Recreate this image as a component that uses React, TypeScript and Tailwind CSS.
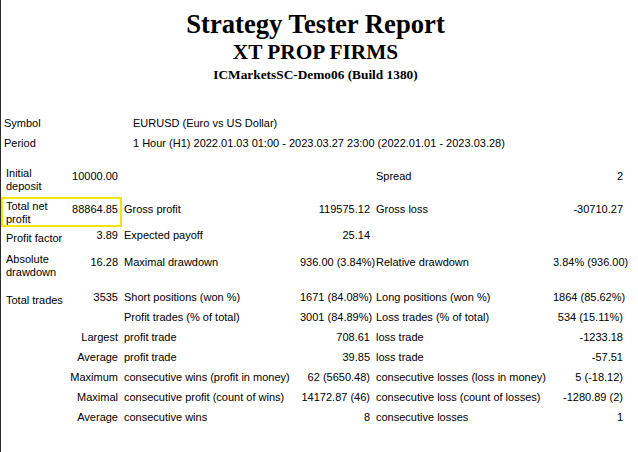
import React from "react";

type Cell = React.ReactNode;

const grid =
  "grid grid-cols-[58px_50px_170px_70px_171px_70px] gap-x-[6px] pl-[3px] pr-[8px]";

// left label + value, offset down the way the report renders it
const Label = ({ children }: { children: Cell }) => (
  <div className="mt-[7px] pl-[2px] whitespace-nowrap leading-[13px]">{children}</div>
);

const Num = ({ children }: { children?: Cell }) => (
  <div className="text-right whitespace-nowrap">{children}</div>
);

const Txt = ({ children }: { children?: Cell }) => (
  <div className="whitespace-nowrap">{children}</div>
);

const StatRow = ({
  h,
  label,
  value,
  l2,
  v2,
  l3,
  v3,
}: {
  h: string;
  label?: Cell;
  value?: Cell;
  l2?: Cell;
  v2?: Cell;
  l3?: Cell;
  v3?: Cell;
}) => (
  <div className={`${grid} ${h} items-center`}>
    {label ? <Label>{label}</Label> : <div />}
    <Num>{value}</Num>
    <Txt>{l2}</Txt>
    <Num>{v2}</Num>
    <Txt>{l3}</Txt>
    <Num>{v3}</Num>
  </div>
);

const SubRow = ({
  head,
  l2,
  v2,
  l3,
  v3,
}: {
  head: string;
  l2: string;
  v2: string;
  l3: string;
  v3: string;
}) => (
  <div className={`${grid} h-[20px] items-center`}>
    <div className="col-span-2 text-right">{head}</div>
    <Txt>{l2}</Txt>
    <Num>{v2}</Num>
    <Txt>{l3}</Txt>
    <Num>{v3}</Num>
  </div>
);

export default function App() {
  return (
    <div className="w-[638px] h-[452px] overflow-hidden bg-white border-l border-[#2e2e2e] text-black">
      <div className="pr-[8px] pt-[9px] text-center font-bold font-['Liberation_Serif',_'Times_New_Roman',_serif]">
        <div className="text-[26.67px] leading-[30px]">Strategy Tester Report</div>
        <div className="text-[21.33px] leading-[26px]">XT PROP FIRMS</div>
        <div className="mt-[1px] text-[13.33px] leading-[18px]">ICMarketsSC-Demo06 (Build 1380)</div>
      </div>

      <div className="mt-[29px] text-[11px] leading-[13px] font-['Liberation_Sans',_Arial,_sans-serif]">
        <div className="flex h-[20px] items-center pl-[3px]">
          <div className="w-[129px]">Symbol</div>
          <div>EURUSD (Euro vs US Dollar)</div>
        </div>
        <div className="flex h-[20px] items-center pl-[3px]">
          <div className="w-[129px]">Period</div>
          <div className="whitespace-nowrap">
            1 Hour (H1) 2022.01.03 01:00 - 2023.03.27 23:00 (2022.01.01 - 2023.03.28)
          </div>
        </div>

        <div className="h-[7px]" />
        <StatRow
          h="h-[32px]"
          label={
            <>
              Initial
              <br />
              deposit
            </>
          }
          value="10000.00"
          l3="Spread"
          v3="2"
        />

        <div className={`${grid} h-[33px] items-start`}>
          <div className="col-span-2 -ml-[3px] -mr-[4px] mt-[5px] h-[30px] border-2 border-[#f3e40c] grid grid-cols-[58px_50px] gap-x-[6px] pl-[1px] pr-[2px]">
            <div className="pl-[2px] pt-[1px] leading-[13px]">
              Total net
              <br />
              profit
            </div>
            <div className="pt-[4px] text-right">88864.85</div>
          </div>
          <div className="pt-[11px]">Gross profit</div>
          <div className="pt-[11px] text-right">119575.12</div>
          <div className="pt-[11px]">Gross loss</div>
          <div className="pt-[11px] text-right">-30710.27</div>
        </div>

        <StatRow h="h-[19px]" label="Profit factor" value="3.89" l2="Expected payoff" v2="25.14" />
        <StatRow
          h="h-[36px]"
          label={
            <>
              Absolute
              <br />
              drawdown
            </>
          }
          value="16.28"
          l2="Maximal drawdown"
          v2="936.00 (3.84%)"
          l3="Relative drawdown"
          v3="3.84% (936.00)"
        />

        <div className="h-[7px]" />
        <StatRow
          h="h-[20px]"
          label="Total trades"
          value="3535"
          l2="Short positions (won %)"
          v2="1671 (84.08%)"
          l3="Long positions (won %)"
          v3="1864 (85.62%)"
        />
        <SubRow
          head=""
          l2="Profit trades (% of total)"
          v2="3001 (84.89%)"
          l3="Loss trades (% of total)"
          v3="534 (15.11%)"
        />
        <SubRow head="Largest" l2="profit trade" v2="708.61" l3="loss trade" v3="-1233.18" />
        <SubRow head="Average" l2="profit trade" v2="39.85" l3="loss trade" v3="-57.51" />
        <SubRow
          head="Maximum"
          l2="consecutive wins (profit in money)"
          v2="62 (5650.48)"
          l3="consecutive losses (loss in money)"
          v3="5 (-18.12)"
        />
        <SubRow
          head="Maximal"
          l2="consecutive profit (count of wins)"
          v2="14172.87 (46)"
          l3="consecutive loss (count of losses)"
          v3="-1280.89 (2)"
        />
        <SubRow head="Average" l2="consecutive wins" v2="8" l3="consecutive losses" v3="1" />
      </div>
    </div>
  );
}
